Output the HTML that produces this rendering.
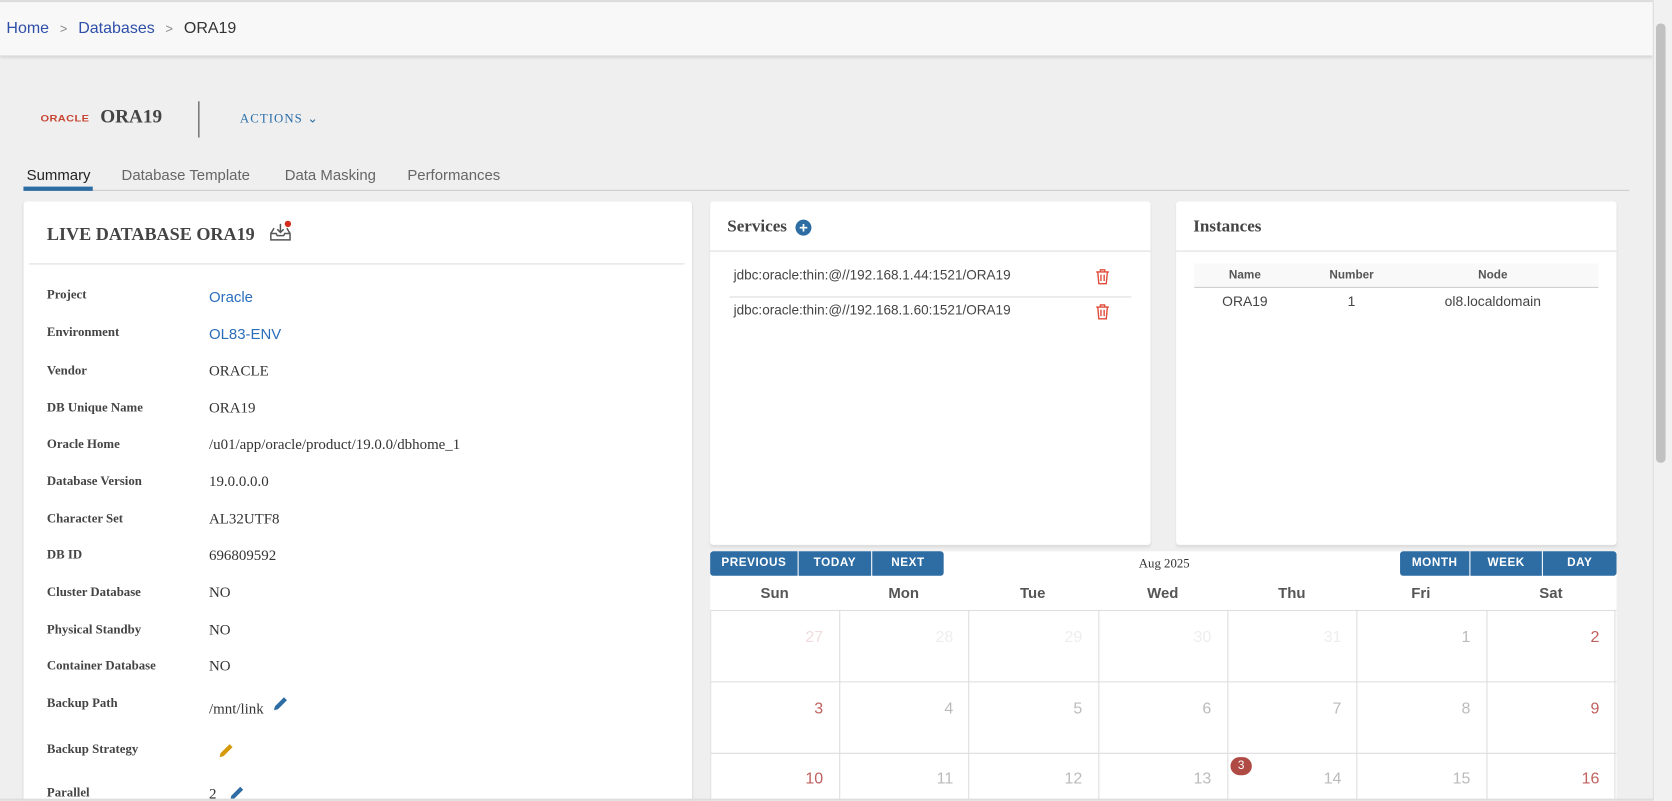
<!DOCTYPE html>
<html style="height:801px;overflow:hidden"><head><style>
*{margin:0;padding:0;box-sizing:border-box}
html{width:1672px;height:801px;overflow:hidden}
body{width:1672px;height:801px;overflow:hidden;background:#efefef;font-family:"Liberation Sans",sans-serif;position:relative}
#w{position:absolute;left:0;top:0;width:1568px;height:751px;transform:scale(1.0663);transform-origin:0 0;overflow:hidden}
.abs{position:absolute}
.top{left:0;top:0;width:1550px;height:52px;background:#f8f8f8;border-top:2px solid #ddd;box-shadow:0 2px 3px rgba(0,0,0,.12)}
.serif{font-family:"Liberation Serif",serif}
.card{background:#fff;border-radius:3px;box-shadow:0 1px 2px rgba(0,0,0,.12)}
.lbl{left:44px;font-family:"Liberation Serif",serif;font-weight:bold;font-size:12px;color:#444}
.val{left:196px;font-family:"Liberation Serif",serif;font-size:14px;color:#333;margin-top:2px}
.lnk{font-family:"Liberation Sans",sans-serif;color:#2a6ebb;font-size:14px}
.btn{background:#2e6da4;color:#fff;font-size:11px;font-weight:bold;letter-spacing:.5px;text-align:center;line-height:23px;height:23px;top:517px}
.dh{top:548px;font-size:14px;font-weight:bold;color:#555;text-align:center;width:121px}
.num{font-size:15px;color:#bbb;text-align:right;width:110px}
</style></head><body><div id="w">
<div class="abs top"></div>
<div class="abs" style="left:6px;top:18px;font-size:15px;color:#333"><span style="color:#2f4fa8">Home</span> <span style="color:#888;font-size:12px;margin:0 6px">&gt;</span> <span style="color:#2f4fa8">Databases</span> <span style="color:#888;font-size:12px;margin:0 6px">&gt;</span> ORA19</div>
<div class="abs" style="left:1550px;top:0;width:18px;height:751px;background:#f1f1f1;border-left:1px solid #ddd"></div>
<div class="abs" style="left:1553px;top:22px;width:9px;height:412px;background:#c1c1c1;border-radius:4px"></div>

<div class="abs" style="left:38px;top:106px;font-size:9px;color:#c74634;font-weight:bold;letter-spacing:.3px;transform:scaleX(1.15);transform-origin:left">ORACLE</div>
<div class="abs serif" style="left:94px;top:99px;font-size:18px;font-weight:bold;color:#444">ORA19</div>
<div class="abs" style="left:186px;top:95px;width:1px;height:34px;background:#444"></div>
<div class="abs serif" style="left:225px;top:104px;font-size:12px;color:#2a6ea8;letter-spacing:1px">ACTIONS ⌄</div>

<div class="abs" style="left:22px;top:178px;width:1506px;height:1px;background:#ccc"></div>
<div class="abs" style="left:22px;top:175px;width:65px;height:4px;background:#2e6da4"></div>
<div class="abs" style="left:25px;top:156px;font-size:14px;color:#222">Summary</div>
<div class="abs" style="left:114px;top:156px;font-size:14px;color:#666">Database Template</div>
<div class="abs" style="left:267px;top:156px;font-size:14px;color:#666">Data Masking</div>
<div class="abs" style="left:382px;top:156px;font-size:14px;color:#666">Performances</div>

<div class="abs card" style="left:22px;top:189px;width:627px;height:562px"></div>
<div class="abs serif" style="left:44px;top:210px;font-size:17px;font-weight:bold;color:#444">LIVE DATABASE ORA19</div>
<svg class="abs" style="left:251px;top:205px" width="24" height="24" viewBox="0 0 24 24"><path d="M3 14h5l1 2h6l1-2h5v6H3z M3 14l3-5 M21 14l-3-5 M12 5v8 M9 10l3 3 3-3" fill="none" stroke="#555" stroke-width="1.4"/><circle cx="19" cy="5" r="3" fill="#d52b1e"/></svg>
<div class="abs" style="left:27px;top:247px;width:615px;height:1px;background:#ddd"></div>

<div class="abs lbl" style="top:269px">Project</div><div class="abs val lnk" style="top:268px">Oracle</div>
<div class="abs lbl" style="top:304px">Environment</div><div class="abs val lnk" style="top:303px">OL83-ENV</div>
<div class="abs lbl" style="top:340px">Vendor</div><div class="abs val" style="top:339px">ORACLE</div>
<div class="abs lbl" style="top:375px">DB Unique Name</div><div class="abs val" style="top:374px">ORA19</div>
<div class="abs lbl" style="top:409px">Oracle Home</div><div class="abs val" style="top:408px">/u01/app/oracle/product/19.0.0/dbhome_1</div>
<div class="abs lbl" style="top:444px">Database Version</div><div class="abs val" style="top:443px">19.0.0.0.0</div>
<div class="abs lbl" style="top:479px">Character Set</div><div class="abs val" style="top:478px">AL32UTF8</div>
<div class="abs lbl" style="top:513px">DB ID</div><div class="abs val" style="top:512px">696809592</div>
<div class="abs lbl" style="top:548px">Cluster Database</div><div class="abs val" style="top:547px">NO</div>
<div class="abs lbl" style="top:583px">Physical Standby</div><div class="abs val" style="top:582px">NO</div>
<div class="abs lbl" style="top:617px">Container Database</div><div class="abs val" style="top:616px">NO</div>
<div class="abs lbl" style="top:652px">Backup Path</div><div class="abs val" style="top:656px">/mnt/link</div>
<div class="abs lbl" style="top:695px">Backup Strategy</div>
<div class="abs lbl" style="top:736px">Parallel</div><div class="abs val" style="top:736px">2</div>
<svg class="abs" style="left:256px;top:652px" width="15" height="15" viewBox="0 0 16 16"><path d="M1 15l1-4 9-9 3 3-9 9z" fill="#2e6da4"/></svg>
<svg class="abs" style="left:205px;top:696px" width="15" height="15" viewBox="0 0 16 16"><path d="M1 15l1-4 9-9 3 3-9 9z" fill="#d49a0a"/></svg>
<svg class="abs" style="left:215px;top:736px" width="15" height="13" viewBox="0 0 16 14"><path d="M1 15l1-4 9-9 3 3-9 9z" fill="#2e6da4"/></svg>

<div class="abs card" style="left:666px;top:189px;width:413px;height:322px;box-shadow:0 2px 2px #ddd"></div>
<div class="abs serif" style="left:682px;top:204px;font-size:16px;font-weight:bold;color:#444">Services</div>
<div class="abs" style="left:746px;top:206px;width:15px;height:15px;border-radius:50%;background:#2e6da4;color:#fff;font-size:14px;font-weight:bold;line-height:15px;text-align:center">+</div>
<div class="abs" style="left:666px;top:235px;width:413px;height:1px;background:#ddd"></div>
<div class="abs" style="left:688px;top:251px;font-size:12.7px;color:#444">jdbc:oracle:thin:@//192.168.1.44:1521/ORA19</div>
<div class="abs" style="left:684px;top:278px;width:377px;height:1px;background:#ddd"></div>
<div class="abs" style="left:688px;top:284px;font-size:12.7px;color:#444">jdbc:oracle:thin:@//192.168.1.60:1521/ORA19</div>
<svg class="abs" style="left:1027px;top:252px" width="14" height="15" viewBox="0 0 14 15"><path d="M1 3h12M5 3V1h4v2M2.5 3l1 11h7l1-11M5.5 5.5v6M8.5 5.5v6" fill="none" stroke="#e04b3a" stroke-width="1.3"/></svg>
<svg class="abs" style="left:1027px;top:285px" width="14" height="15" viewBox="0 0 14 15"><path d="M1 3h12M5 3V1h4v2M2.5 3l1 11h7l1-11M5.5 5.5v6M8.5 5.5v6" fill="none" stroke="#e04b3a" stroke-width="1.3"/></svg>

<div class="abs card" style="left:1103px;top:189px;width:413px;height:322px;box-shadow:0 2px 2px #ddd"></div>
<div class="abs serif" style="left:1119px;top:204px;font-size:16px;font-weight:bold;color:#444">Instances</div>
<div class="abs" style="left:1103px;top:235px;width:413px;height:1px;background:#ddd"></div>
<div class="abs" style="left:1120px;top:247px;width:379px;height:23px;background:#f9f9f9;border-bottom:1px solid #ccc"></div>
<div class="abs" style="left:1120px;top:252px;width:95px;text-align:center;font-size:11px;font-weight:bold;color:#555">Name</div>
<div class="abs" style="left:1220px;top:252px;width:95px;text-align:center;font-size:11px;font-weight:bold;color:#555">Number</div>
<div class="abs" style="left:1320px;top:252px;width:160px;text-align:center;font-size:11px;font-weight:bold;color:#555">Node</div>
<div class="abs" style="left:1120px;top:275px;width:95px;text-align:center;font-size:13px;color:#444">ORA19</div>
<div class="abs" style="left:1220px;top:275px;width:95px;text-align:center;font-size:13px;color:#444">1</div>
<div class="abs" style="left:1320px;top:275px;width:160px;text-align:center;font-size:13px;color:#444">ol8.localdomain</div>

<div class="abs" style="left:666px;top:517px;width:850px;height:234px;background:#fff"></div>
<div class="abs btn" style="left:666px;width:82px;border-radius:3px 0 0 3px">PREVIOUS</div>
<div class="abs btn" style="left:749px;width:68px">TODAY</div>
<div class="abs btn" style="left:818px;width:67px;border-radius:0 3px 3px 0">NEXT</div>
<div class="abs serif" style="left:1068px;top:521px;font-size:12px;color:#333">Aug 2025</div>
<div class="abs btn" style="left:1313px;width:65px;border-radius:3px 0 0 3px">MONTH</div>
<div class="abs btn" style="left:1379px;width:67px">WEEK</div>
<div class="abs btn" style="left:1447px;width:69px;border-radius:0 3px 3px 0">DAY</div>
<div class="abs dh" style="left:666px">Sun</div><div class="abs dh" style="left:787px">Mon</div><div class="abs dh" style="left:908px">Tue</div><div class="abs dh" style="left:1030px">Wed</div><div class="abs dh" style="left:1151px">Thu</div><div class="abs dh" style="left:1272px">Fri</div><div class="abs dh" style="left:1394px">Sat</div>
<svg class="abs" style="left:666px;top:572px" width="850" height="179"><g stroke="#ddd" stroke-width="1" fill="none"><path d="M0 0.5H850M0 67.5H850M0 134.5H850M0.5 0V179M121.5 0V179M242.5 0V179M364.5 0V179M485.5 0V179M606.5 0V179M728.5 0V179M848.5 0V179"/></g></svg>
<div class="abs num" style="left:662px;top:589px;color:#f0dcdc">27</div><div class="abs num" style="left:784px;top:589px;color:#eee">28</div><div class="abs num" style="left:905px;top:589px;color:#eee">29</div><div class="abs num" style="left:1026px;top:589px;color:#eee">30</div><div class="abs num" style="left:1148px;top:589px;color:#eee">31</div><div class="abs num" style="left:1269px;top:589px">1</div><div class="abs num" style="left:1390px;top:589px;color:#c0605f">2</div>
<div class="abs num" style="left:662px;top:656px;color:#c0605f">3</div><div class="abs num" style="left:784px;top:656px">4</div><div class="abs num" style="left:905px;top:656px">5</div><div class="abs num" style="left:1026px;top:656px">6</div><div class="abs num" style="left:1148px;top:656px">7</div><div class="abs num" style="left:1269px;top:656px">8</div><div class="abs num" style="left:1390px;top:656px;color:#c0605f">9</div>
<div class="abs num" style="left:662px;top:722px;color:#c0605f">10</div><div class="abs num" style="left:784px;top:722px">11</div><div class="abs num" style="left:905px;top:722px">12</div><div class="abs num" style="left:1026px;top:722px">13</div><div class="abs num" style="left:1148px;top:722px">14</div><div class="abs num" style="left:1269px;top:722px">15</div><div class="abs num" style="left:1390px;top:722px;color:#c0605f">16</div>
<div class="abs" style="left:1154px;top:710px;width:20px;height:17px;border-radius:9px;background:#b04a45;color:#fff;font-size:11px;text-align:center;line-height:17px">3</div>
<div class="abs" style="left:0;top:749px;width:1550px;height:2px;background:#ddd"></div>
</div></body></html>
